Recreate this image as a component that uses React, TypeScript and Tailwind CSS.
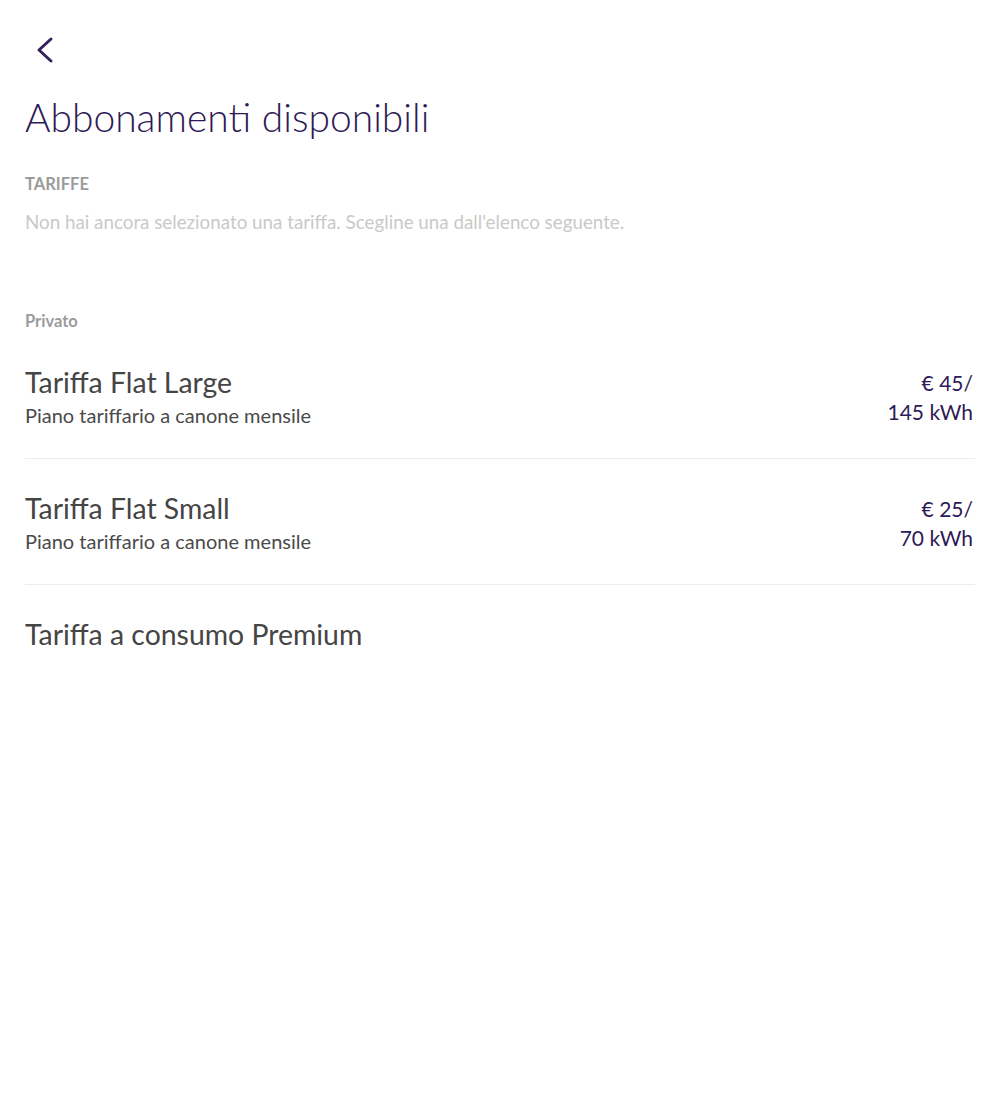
type Tariff = {
  name: string;
  description?: string;
  price?: string[];
};

const tariffs: Tariff[] = [
  {
    name: "Tariffa Flat Large",
    description: "Piano tariffario a canone mensile",
    price: ["€ 45/", "145 kWh"],
  },
  {
    name: "Tariffa Flat Small",
    description: "Piano tariffario a canone mensile",
    price: ["€ 25/", "70 kWh"],
  },
  { name: "Tariffa a consumo Premium" },
];

export default function App() {
  return (
    <div
      className="min-h-[1113px] bg-white px-[25px] pt-[36px]"
      style={{ fontFamily: "Lato, 'Open Sans', sans-serif" }}
    >
      {/* Back */}
      <button className="ml-[10px] block text-[#35215e]">
        <svg width="20" height="28" viewBox="0 0 20 28" fill="none">
          <polyline
            points="16,3 4,14 16,25"
            stroke="currentColor"
            strokeWidth="3"
            strokeLinecap="round"
            strokeLinejoin="round"
          />
        </svg>
      </button>

      {/* Title */}
      <h1 className="mt-[29px] text-[39px] leading-[48px] font-light text-[#2e1a56]">
        Abbonamenti disponibili
      </h1>

      {/* Tariffe */}
      <div className="mt-[33px] text-[16.5px] leading-[20px] font-bold text-[#9b9b9b]">
        TARIFFE
      </div>
      <p className="mt-[16px] text-[18.8px] leading-[24px] text-[#c9c9c9]">
        Non hai ancora selezionato una tariffa. Scegline una dall'elenco seguente.
      </p>

      {/* Privato */}
      <div className="mt-[77px] text-[16.5px] leading-[20px] font-bold text-[#9b9b9b]">
        Privato
      </div>

      <div className="mt-[2px]">
        {tariffs.map((t, i) => (
          <div
            key={t.name}
            className={`flex items-start justify-between pt-[32px] pb-[31px] ${
              i < tariffs.length - 1 ? "border-b border-[#ececec]" : ""
            }`}
          >
            <div>
              <div className="text-[28.4px] leading-[34px] text-[#454545]">{t.name}</div>
              {t.description && (
                <div className="mt-[4px] text-[20px] leading-[24px] text-[#4a4a4a]">
                  {t.description}
                </div>
              )}
            </div>
            {t.price && (
              <div className="pt-[3px] pr-[2px] text-right text-[21px] leading-[29px] text-[#2e1a56]">
                {t.price.map((p) => (
                  <div key={p}>{p}</div>
                ))}
              </div>
            )}
          </div>
        ))}
      </div>
    </div>
  );
}
